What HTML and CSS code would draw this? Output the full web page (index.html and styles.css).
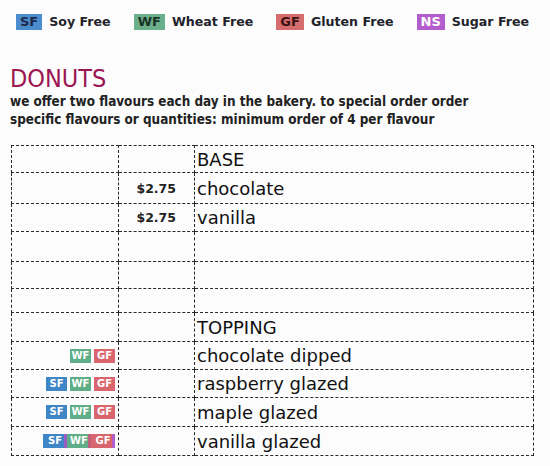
FILE: index.html
```html
<!DOCTYPE html>
<html>
<head>
<meta charset="utf-8">
<link rel="stylesheet" href="styles.css">
</head>
<body>
<div class="legend">
  <span class="item"><span class="lb sf">SF</span>Soy Free</span>
  <span class="item"><span class="lb wf">WF</span>Wheat Free</span>
  <span class="item"><span class="lb gf">GF</span>Gluten Free</span>
  <span class="item"><span class="lb ns">NS</span>Sugar Free</span>
</div>
<h1 class="title">DONUTS</h1>
<p class="desc">we offer two flavours each day in the bakery. to special order order specific flavours or quantities: minimum order of 4 per flavour</p>
<table class="menu">
  <tr class="r27"><td class="c1"></td><td class="c2"></td><td class="c3">BASE</td></tr>
  <tr class="r31"><td class="c1"></td><td class="c2">$2.75</td><td class="c3">chocolate</td></tr>
  <tr class="r28"><td class="c1"></td><td class="c2">$2.75</td><td class="c3">vanilla</td></tr>
  <tr class="r30"><td class="c1"></td><td class="c2"></td><td class="c3"></td></tr>
  <tr class="r27"><td class="c1"></td><td class="c2"></td><td class="c3"></td></tr>
  <tr class="r24"><td class="c1"></td><td class="c2"></td><td class="c3"></td></tr>
  <tr class="r29"><td class="c1"></td><td class="c2"></td><td class="c3">TOPPING</td></tr>
  <tr class="r28"><td class="c1"><span class="tb wf">WF</span><span class="tb gf">GF</span></td><td class="c2"></td><td class="c3">chocolate dipped</td></tr>
  <tr class="r28"><td class="c1"><span class="tb sf">SF</span><span class="tb wf">WF</span><span class="tb gf">GF</span></td><td class="c2"></td><td class="c3">raspberry glazed</td></tr>
  <tr class="r29"><td class="c1"><span class="tb sf">SF</span><span class="tb wf">WF</span><span class="tb gf">GF</span></td><td class="c2"></td><td class="c3">maple glazed</td></tr>
  <tr class="r29"><td class="c1"><span class="joined"><span class="tb sf">SF</span><span class="tb wf">WF</span><span class="tb gf">GF</span></span></td><td class="c2"></td><td class="c3">vanilla glazed</td></tr>
</table>
</body>
</html>
```

FILE: styles.css
```css
html, body {
  margin: 0;
  padding: 0;
  background: #fcfcfc;
}
body {
  padding: 14px 0 0 10px;
  font-family: "DejaVu Sans", Verdana, sans-serif;
  color: #1a1a1a;
}
.legend {
  display: flex;
  gap: 23px;
  padding-left: 6px;
  font-weight: bold;
  font-size: 12.6px;
  line-height: 16px;
  color: #22222a;
}
.item {
  display: flex;
  align-items: center;
  gap: 7px;
}
.lb {
  display: inline-block;
  padding: 0 4px;
  height: 16px;
  line-height: 16px;
  font-size: 13px;
}
.lb.sf { background: #4b8ccd; color: #1c2a48; }
.lb.wf { background: #6caf8c; color: #1a3326; }
.lb.gf { background: #d66c6d; color: #3a1414; }
.lb.ns { background: #b35dcc; color: #fff; }
.title {
  margin: 35px 0 0 0;
  font-family: "DejaVu Sans Condensed", "DejaVu Sans", sans-serif;
  font-weight: normal;
  font-size: 25px;
  line-height: 28px;
  color: #9b1652;
}
.desc {
  margin: 0;
  width: 485px;
  font-family: "DejaVu Sans Condensed", "DejaVu Sans", sans-serif;
  font-weight: bold;
  font-size: 13.4px;
  line-height: 18px;
  color: #222;
}
.menu {
  margin: 16px 0 0 1px;
  border-collapse: collapse;
  width: 523px;
  table-layout: fixed;
}
.menu td {
  border: 1px dashed #2a2a2a;
  padding: 0;
  vertical-align: middle;
}
.c1 { width: 103px; text-align: right; padding-right: 3px !important; font-size: 0; }
.c2 {
  width: 57px;
  text-align: right;
  padding-right: 18px !important;
  font-weight: bold;
  font-size: 12.5px;
  color: #222;
}
.c3 {
  padding-left: 2px !important;
  font-size: 18px;
  color: #111;
}
.r24 { height: 24px; }
.r27 { height: 27px; }
.r28 { height: 28px; }
.r29 { height: 29px; }
.r30 { height: 30px; }
.r31 { height: 31px; }
.tb {
  display: inline-block;
  width: 21px;
  height: 14px;
  line-height: 14px;
  margin-left: 3px;
  text-align: center;
  font-size: 10px;
  font-weight: bold;
  color: #fff;
  vertical-align: middle;
}
.tb.sf { background: #3f86c6; }
.tb.wf { background: #5fae87; }
.tb.gf { background: #d9666c; }
.joined { display: inline-flex; }
.joined .tb { margin-left: 0; width: 24px; }
.joined .tb.sf { box-shadow: inset -3px 0 0 #9a5cc0; }
.joined .tb.wf { box-shadow: inset -3px 0 0 #c0607e; }
.joined .tb.gf { box-shadow: inset -3px 0 0 #b35ccc; }
```
